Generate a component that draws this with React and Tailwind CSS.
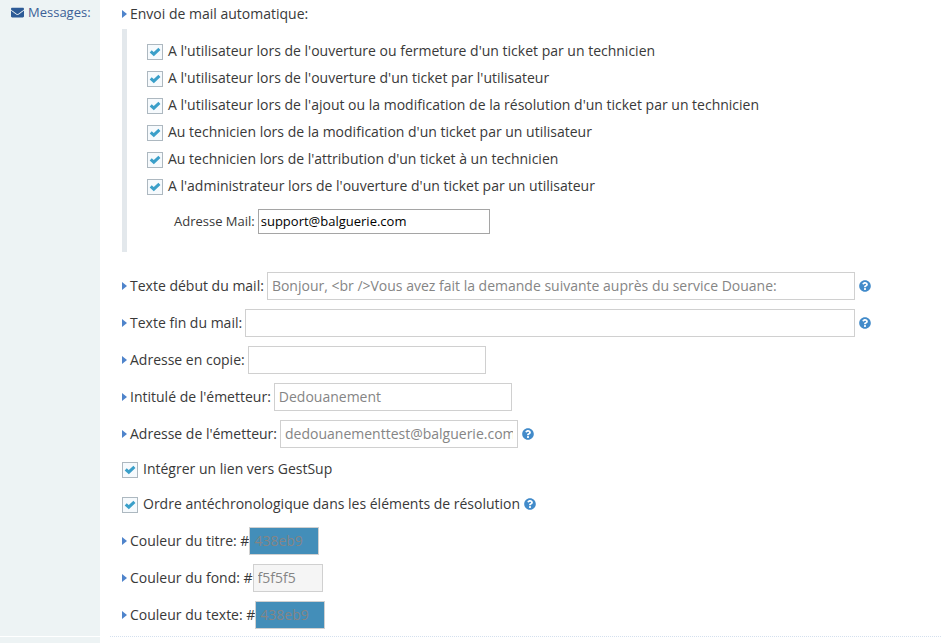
import React, { useState } from "react";
import { FaEnvelope, FaQuestionCircle } from "react-icons/fa";

const MAIL_RULES = [
  "A l'utilisateur lors de l'ouverture ou fermeture d'un ticket par un technicien",
  "A l'utilisateur lors de l'ouverture d'un ticket par l'utilisateur",
  "A l'utilisateur lors de l'ajout ou la modification de la résolution d'un ticket par un technicien",
  "Au technicien lors de la modification d'un ticket par un utilisateur",
  "Au technicien lors de l'attribution d'un ticket à un technicien",
  "A l'administrateur lors de l'ouverture d'un ticket par un utilisateur",
];

export default function App() {
  return (
    <div className="flex min-h-screen flex-col bg-white font-['Open_Sans',sans-serif] text-sm text-[#393939]">
      <div className="flex">
        <div className="w-[100px] shrink-0 border-b border-white bg-[#edf3f4] pl-[11px] pt-[2px]">
          <div className="flex items-center gap-1 text-[13px] leading-5 text-[#3c5f97]">
            <FaEnvelope className="size-[13px] text-[#2c5a96]" />
            Messages:
          </div>
        </div>
        <div className="ml-[10px] min-w-0 flex-1 border-b border-dotted border-[#d5e0ee] pb-[7px] pl-3">
          <MessageSettings />
        </div>
      </div>
      <div className="w-[100px] flex-1 bg-[#edf3f4]" />
    </div>
  );
}

function MessageSettings() {
  return (
    <form>
      <div className="flex h-[29px] items-center pb-[2px]">
        <Caret />
        Envoi de mail automatique:
      </div>

      <div className="border-l-[5px] border-[#e3e8ec] pb-[18px] pl-5 pt-[9px]">
        {MAIL_RULES.map((rule) => (
          <div key={rule} className="flex h-[27px] items-center">
            <CheckItem label={rule} />
          </div>
        ))}
        <div className="mt-[9px] flex items-center gap-[3px] pl-[27px] text-[13px]">
          <label htmlFor="admin-mail">Adresse Mail:</label>
          <input
            id="admin-mail"
            type="text"
            defaultValue="support@balguerie.com"
            className="h-[25px] w-[232px] border border-[#a5a5a5] px-[2px] pb-[2px] text-black"
          />
        </div>
      </div>

      <div className="mt-5 flex flex-col gap-[9px]">
        <Field
          id="mail-start"
          label="Texte début du mail:"
          value="Bonjour, <br />Vous avez fait la demande suivante auprès du service Douane:"
          wide
          help
        />
        <Field id="mail-end" label="Texte fin du mail:" value="" wide help />
        <Field id="mail-cc" label="Adresse en copie:" value="" />
        <Field id="from-name" label="Intitulé de l'émetteur:" value="Dedouanement" />
        <Field
          id="from-mail"
          label="Adresse de l'émetteur:"
          value="dedouanementtest@balguerie.com"
          help
        />
        <div className="flex h-[26px] items-center">
          <CheckItem label="Intégrer un lien vers GestSup" />
        </div>
        <div className="flex h-[26px] items-center gap-1">
          <CheckItem label="Ordre antéchronologique dans les éléments de résolution" />
          <span className="flex pb-[2px]">
            <Help />
          </span>
        </div>
        <ColorField id="color-title" label="Couleur du titre: #" value="438eb9" />
        <ColorField id="color-bg" label="Couleur du fond: #" value="f5f5f5" />
        <ColorField id="color-text" label="Couleur du texte: #" value="438eb9" />
      </div>
    </form>
  );
}

function Field({ id, label, value, wide, help }) {
  return (
    <div className="flex items-center pr-[70px]">
      <Caret />
      <label htmlFor={id} className="shrink-0">
        {label}
      </label>
      <input
        id={id}
        type="text"
        defaultValue={value}
        className={`ml-[3px] h-7 border border-[#d0d0d0] bg-white px-1 pb-[2px] text-[#858585] ${
          wide ? "min-w-0 flex-1" : "w-[238px]"
        }`}
      />
      {help && (
        <span className="ml-1 flex">
          <Help />
        </span>
      )}
    </div>
  );
}

function ColorField({ id, label, value }) {
  const [color, setColor] = useState(value);

  return (
    <div className="flex items-center">
      <Caret />
      <label htmlFor={id}>{label}</label>
      <input
        id={id}
        type="text"
        value={color}
        onChange={(e) => setColor(e.target.value)}
        className="h-7 w-[70px] border border-[#d0d0d0] px-1 pb-[2px] text-[#858585]"
        style={{ backgroundColor: `#${color}` }}
      />
    </div>
  );
}

function CheckItem({ label }) {
  return (
    <label className="flex items-center gap-[5px]">
      <span className="relative size-4 shrink-0">
        <input
          type="checkbox"
          defaultChecked
          className="peer block size-4 appearance-none border border-[#adb8c0] bg-[#f6fafd]"
        />
        <svg
          viewBox="0 0 16 16"
          className="pointer-events-none absolute inset-0 hidden size-4 peer-checked:block"
        >
          <path
            d="M3.7 7.4 L6.8 10.2 L12.4 4.9"
            fill="none"
            stroke="#3a9fc9"
            strokeWidth="3"
          />
        </svg>
      </span>
      <span className="pb-[2px]">{label}</span>
    </label>
  );
}

function Caret() {
  return (
    <svg viewBox="0 0 5 8" className="mr-[3px] h-2 w-[5px] shrink-0 fill-[#4f84cb]">
      <path d="M0 0 L5 4 L0 8 Z" />
    </svg>
  );
}

function Help() {
  return (
    <button type="button" aria-label="Aide">
      <FaQuestionCircle className="size-3 text-[#428bca]" />
    </button>
  );
}
